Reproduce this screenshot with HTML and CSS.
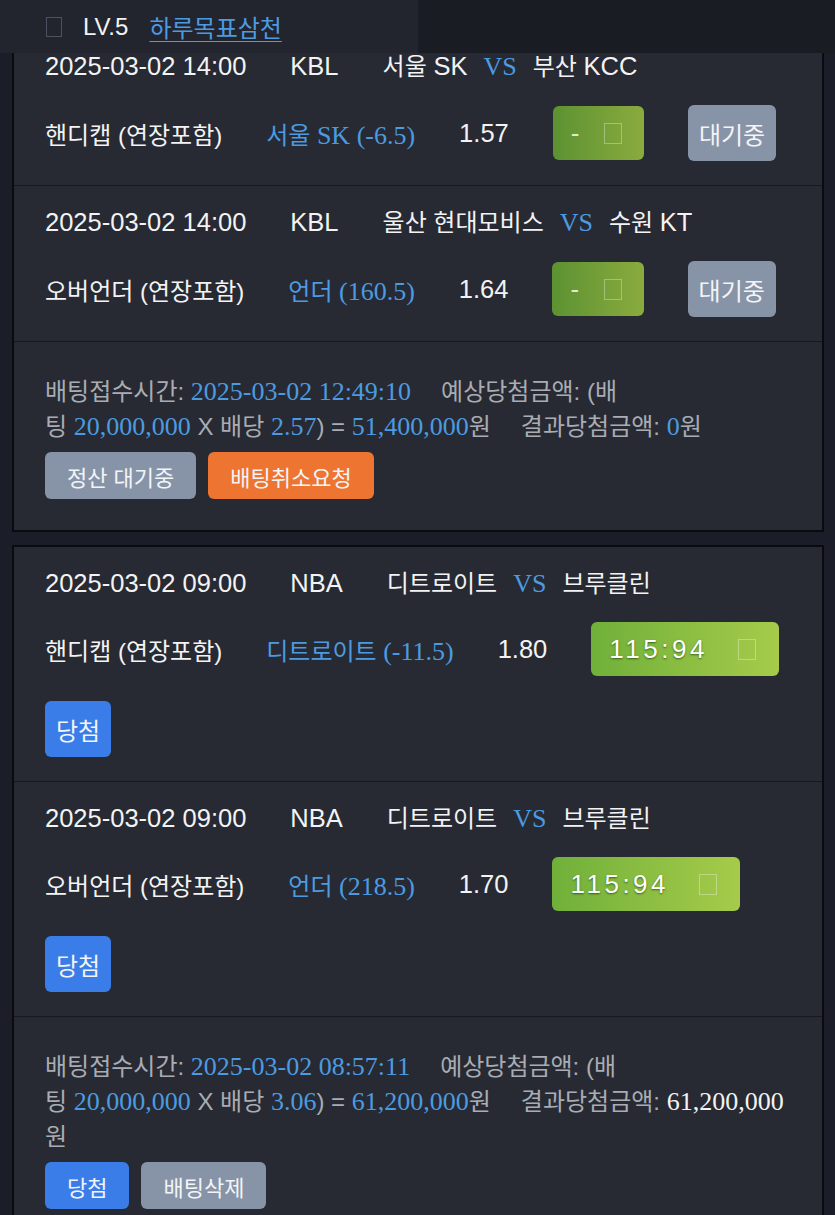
FILE: index.html
```html
<!DOCTYPE html>
<html lang="ko">
<head>
<meta charset="utf-8">
<title>배팅내역</title>
<link rel="stylesheet" href="styles.css">
</head>
<body>
<header class="topbar">
  <div class="topbar-main">
    <span class="tofu tofu-dim"></span>
    <span class="lv">LV.5</span>
    <a class="goal" href="#">하루목표삼천</a>
  </div>
  <div class="topbar-rest"></div>
</header>

<main class="list">
  <section class="card">
    <div class="row">
      <div class="match">
        <span class="en">2025-03-02 14:00</span>
        <span class="en">KBL</span>
        <span class="teams"><span>서울 <span class="en">SK</span></span><span class="vs">VS</span><span>부산 <span class="en">KCC</span></span></span>
      </div>
      <div class="bet">
        <span class="market">핸디캡 (연장포함)</span>
        <span class="pick">서울<span class="serif"> SK (-6.5)</span></span>
        <span class="en">1.57</span>
        <span class="score pending"><span class="score-text">-</span><span class="tofu"></span></span>
        <span class="status gray">대기중</span>
      </div>
    </div>
    <div class="row">
      <div class="match">
        <span class="en">2025-03-02 14:00</span>
        <span class="en">KBL</span>
        <span class="teams"><span>울산 현대모비스</span><span class="vs">VS</span><span>수원 <span class="en">KT</span></span></span>
      </div>
      <div class="bet">
        <span class="market">오버언더 (연장포함)</span>
        <span class="pick">언더<span class="serif"> (160.5)</span></span>
        <span class="en">1.64</span>
        <span class="score pending"><span class="score-text">-</span><span class="tofu"></span></span>
        <span class="status gray">대기중</span>
      </div>
    </div>
    <div class="info">
      <p class="info-text">배팅접수시간: <span class="serif blue">2025-03-02 12:49:10</span><span class="sep">예상당첨금액: (배</span><br>팅 <span class="serif blue">20,000,000</span> X 배당 <span class="serif blue">2.57</span>) = <span class="serif blue">51,400,000</span>원<span class="sep">결과당첨금액: <span class="serif blue">0</span>원</span></p>
      <div class="actions">
        <span class="action gray">정산 대기중</span>
        <span class="action orange">배팅취소요청</span>
      </div>
    </div>
  </section>

  <section class="card">
    <div class="row">
      <div class="match">
        <span class="en">2025-03-02 09:00</span>
        <span class="en">NBA</span>
        <span class="teams"><span>디트로이트</span><span class="vs">VS</span><span>브루클린</span></span>
      </div>
      <div class="bet">
        <span class="market">핸디캡 (연장포함)</span>
        <span class="pick">디트로이트<span class="serif"> (-11.5)</span></span>
        <span class="en">1.80</span>
        <span class="score done"><span class="score-text">115:94</span><span class="tofu"></span></span>
        <span class="status blue-bg">당첨</span>
      </div>
    </div>
    <div class="row">
      <div class="match">
        <span class="en">2025-03-02 09:00</span>
        <span class="en">NBA</span>
        <span class="teams"><span>디트로이트</span><span class="vs">VS</span><span>브루클린</span></span>
      </div>
      <div class="bet">
        <span class="market">오버언더 (연장포함)</span>
        <span class="pick">언더<span class="serif"> (218.5)</span></span>
        <span class="en">1.70</span>
        <span class="score done"><span class="score-text">115:94</span><span class="tofu"></span></span>
        <span class="status blue-bg">당첨</span>
      </div>
    </div>
    <div class="info">
      <p class="info-text">배팅접수시간: <span class="serif blue">2025-03-02 08:57:11</span><span class="sep">예상당첨금액: (배</span><br>팅 <span class="serif blue">20,000,000</span> X 배당 <span class="serif blue">3.06</span>) = <span class="serif blue">61,200,000</span>원<span class="sep">결과당첨금액: <span class="serif white">61,200,000</span></span><br>원</p>
      <div class="actions">
        <span class="action blue-bg">당첨</span>
        <span class="action gray">배팅삭제</span>
      </div>
    </div>
  </section>
</main>
</body>
</html>
```

FILE: styles.css
```css
* { box-sizing: border-box; }

html, body {
  margin: 0;
  padding: 0;
}

body {
  background: #1b1e28;
  color: #f3f3f3;
  font-family: "Liberation Sans", "Noto Sans CJK KR", sans-serif;
  font-size: 24px;
  width: 835px;
  height: 1215px;
  overflow: hidden;
}

/* ---------- fixed top bar ---------- */
.topbar {
  position: fixed;
  top: 0;
  left: 0;
  right: 0;
  height: 53px;
  display: flex;
  z-index: 10;
}

.topbar-main {
  width: 418px;
  background: #22252e;
  display: flex;
  align-items: center;
  padding-left: 46px;
  gap: 21px;
}

.topbar-rest {
  flex: 1;
  background: #1a1c23;
}

.lv {
  font-size: 24px;
  color: #f2f2f2;
}

.goal {
  color: #4c9be0;
  font-size: 24px;
  text-decoration: underline;
  text-underline-offset: 4px;
  text-decoration-thickness: 1px;
}

.tofu {
  display: inline-block;
  width: 18px;
  height: 21px;
  border: 1px solid rgba(255, 255, 255, 0.32);
}

.tofu-dim {
  width: 16px;
  height: 20px;
  border-color: #4b5160;
}

/* ---------- list / cards ---------- */
.list {
  padding: 28px 11px 0 12px;
  display: flex;
  flex-direction: column;
  gap: 13px;
}

.card {
  background: #272a33;
  border: 2px solid #0a0b0e;
}

.row {
  padding: 22px 31px 24px;
  border-bottom: 1px solid #17191f;
  display: flex;
  flex-direction: column;
  gap: 25px;
}

.match {
  display: flex;
  align-items: baseline;
  gap: 44px;
  height: 28px;
  line-height: 28px;
  white-space: nowrap;
}

.teams {
  display: flex;
  align-items: baseline;
  gap: 16px;
}

.en {
  font-size: 25.5px;
}

.vs {
  font-family: "Liberation Serif", serif;
  font-size: 26px;
  color: #4c9be0;
}

.bet {
  display: flex;
  flex-wrap: wrap;
  align-items: center;
  column-gap: 44px;
  row-gap: 25px;
  white-space: nowrap;
}

.pick {
  color: #4c9be0;
}

.serif {
  font-family: "Liberation Serif", "Noto Sans CJK KR", serif;
  font-size: 26px;
}

.blue { color: #4c9be0; }
.white { color: #f3f3f3; }

.score {
  display: inline-flex;
  align-items: center;
  height: 54px;
  padding: 0 23px 0 18px;
  border-radius: 6px;
  color: #ffffff;
}

.score-text {
  font-size: 26px;
  letter-spacing: 3.5px;
  margin-right: 30px;
  text-shadow: 0 1px 2px rgba(30, 70, 10, 0.75);
}

.score.pending {
  background: linear-gradient(90deg, #5c9232, #8aab3e);
  padding-right: 22px;
}

.score.pending .score-text {
  color: #dfe8d0;
  text-shadow: none;
  margin-right: 21px;
}

.score.done {
  background: linear-gradient(90deg, #70b03a, #a6cb4a);
}

.status {
  display: inline-flex;
  align-items: center;
  justify-content: center;
  height: 56px;
  padding: 0 11px;
  border-radius: 6px;
  color: #f2f4f7;
  font-size: 24px;
}

.gray { background: #8794a7; }
.orange { background: #ee7431; }
.blue-bg { background: #3a7de8; }

/* ---------- info ---------- */
.info {
  padding: 32px 31px 31px;
}

.info-text {
  margin: 0;
  color: #a9acb3;
  line-height: 35px;
}

.sep {
  margin-left: 30px;
}

.actions {
  display: flex;
  gap: 12px;
  margin-top: 8px;
}

.action {
  display: inline-flex;
  align-items: center;
  height: 47px;
  padding: 0 22px;
  border-radius: 6px;
  color: #f2f4f7;
  font-size: 22px;
}
```
